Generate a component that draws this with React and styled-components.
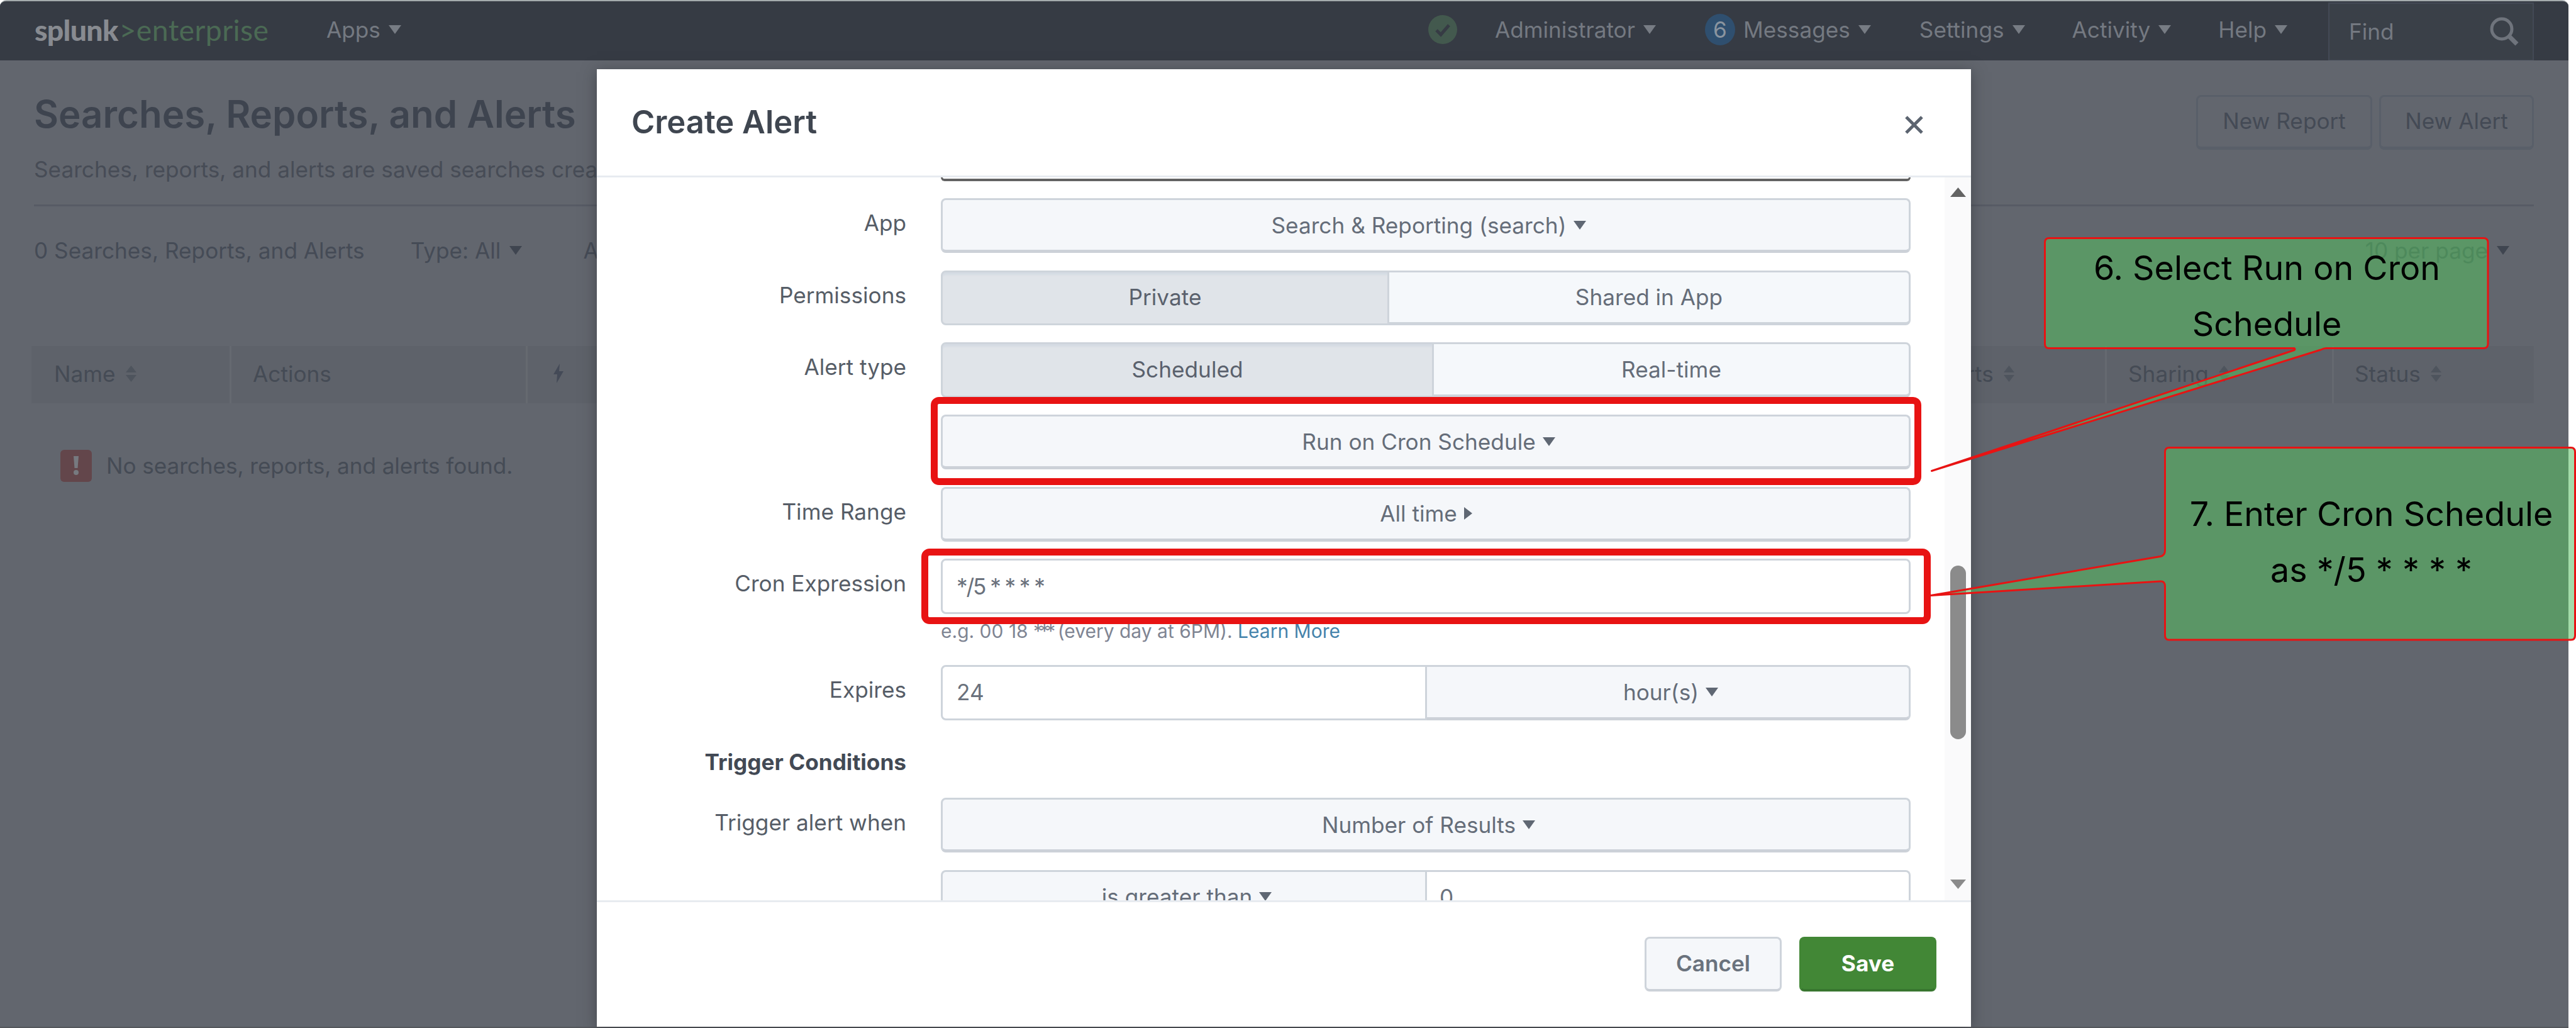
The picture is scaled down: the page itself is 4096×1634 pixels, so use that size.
import React from "react";
import styled, { createGlobalStyle } from "styled-components";

const GlobalStyle = createGlobalStyle`
  *, *::before, *::after { box-sizing: border-box; }
  html, body { margin: 0; padding: 0; background: #fff; overflow: hidden; }
  body { font-family: Inter, "Liberation Sans", sans-serif; font-size: 35.2px; color: #555d68; }
  h1, h2, p { margin: 0; font-weight: inherit; font-size: inherit; }
`;

const Screen = styled.div`
  position: relative;
  width: 4096px;
  height: 1634px;
  overflow: hidden;
`;

const Page = styled.div`
  width: 4084px;
  height: 1634px;
  background: #62666e;
  border-top: 2px solid #a4abad;
  border-bottom: 2px solid #54575c;
  border-radius: 10px 10px 0 0;
  overflow: hidden;
`;

/* ---------- top bar ---------- */

const NavBar = styled.nav`
  display: flex;
  align-items: stretch;
  height: 94px;
  padding: 0 55px 0 55px;
  background: #363b44;
  color: #747981;
`;

const Logo = styled.div`
  display: flex;
  align-items: center;
  gap: 2px;
  width: 464px;
  padding-bottom: 4px;
  font-family: Lato, "Liberation Sans", sans-serif;
  font-size: 46.4px;
  white-space: nowrap;
`;

const LogoName = styled.span`
  font-weight: 900;
  letter-spacing: -0.7px;
  color: #888b91;
`;

const LogoProduct = styled.span`
  color: #4b6a54;
  letter-spacing: 0.4px;
`;

const NavItem = styled.div`
  display: flex;
  align-items: center;
  gap: 13px;
  padding-bottom: 5px;
  margin-right: ${(p) => p.$after || 0}px;
  white-space: nowrap;
`;

const NavRight = styled.div`
  display: flex;
  margin-left: auto;
`;

const Badge = styled.span`
  display: flex;
  align-items: center;
  justify-content: center;
  width: 48px;
  height: 50px;
  border-radius: 50%;
  background: #2f4f6f;
  color: #8a949f;
`;

const FindBox = styled.div`
  display: flex;
  align-items: center;
  justify-content: space-between;
  width: 327px;
  margin-top: 2px;
  padding: 0 22px 2px 31px;
  background: #3a4048;
  border: 2px solid #434955;
  border-bottom-width: 1px;
`;

/* ---------- page header ---------- */

const PageHead = styled.header`
  display: flex;
  justify-content: space-between;
  align-items: flex-start;
  height: 232px;
  margin: 0 55px 0 54px;
  padding-top: 45px;
  border-bottom: 3px solid #575b65;
`;

const PageTitle = styled.h1`
  font-size: 60px;
  line-height: 80px;
  font-weight: 600;
  color: #3e444f;
`;

const PageNote = styled.p`
  margin-top: 20px;
  line-height: 56px;
  white-space: nowrap;
  color: #474c56;
`;

const HeadActions = styled.div`
  display: flex;
  gap: 11px;
  padding-top: 10px;
`;

const GhostButton = styled.button`
  width: ${(p) => p.$w}px;
  height: 87px;
  padding: 0 0 3px;
  font: inherit;
  color: #444a55;
  background: transparent;
  border: 3px solid #595f69;
  border-bottom-width: 5px;
  border-radius: 8px;
`;

const FilterBar = styled.div`
  display: flex;
  align-items: center;
  height: 140px;
  padding: 0 94px 0 54px;
  color: #454b56;
  white-space: nowrap;
`;

const Filter = styled.span`
  display: flex;
  align-items: center;
  gap: 14px;
  margin-left: ${(p) => (p.$end ? "auto" : (p.$before || 0) + "px")};
`;

/* ---------- table ---------- */

const TableHead = styled.div`
  display: grid;
  grid-template-columns: 318px 471px 2220px 291px 361px 1fr;
  height: 91px;
  margin: 82px 55px 0 50px;
  background: #5e626a;
  color: #454b55;
`;

const HeadCell = styled.div`
  display: flex;
  align-items: center;
  gap: 16px;
  padding: 0 0 4px ${(p) => p.$pad}px;
  border-right: ${(p) => (p.$last ? 0 : 3)}px solid #656970;
`;

const EmptyRow = styled.div`
  display: flex;
  align-items: center;
  gap: 23px;
  height: 52px;
  margin: 73px 0 0 96px;
  letter-spacing: -0.08px;
  color: #454b55;
`;

const ErrorMark = styled.span`
  display: flex;
  align-items: center;
  justify-content: center;
  width: 50px;
  height: 51px;
  border-radius: 6px;
  background: #63464b;
`;

/* ---------- dialog ---------- */

const Dialog = styled.section`
  position: absolute;
  left: 949px;
  top: 110px;
  width: 2185px;
  height: 1522px;
  display: flex;
  flex-direction: column;
  background: #fff;
  box-shadow: 0 4px 22px rgba(40, 42, 46, 0.5);
`;

const DialogHead = styled.header`
  display: flex;
  align-items: center;
  justify-content: space-between;
  height: 172px;
  padding: 0 76px 0 55px;
  border-bottom: 3px solid #e7ebf0;
  svg { margin-top: 7px; }
`;

const DialogTitle = styled.h2`
  padding-bottom: 3px;
  font-size: 50.7px;
  font-weight: 600;
  color: #3f4650;
`;

const DialogBody = styled.div`
  display: flex;
  flex: none;
  height: 1149px;
  overflow: hidden;
`;

const Form = styled.div`
  flex: none;
  width: 2143px;
  display: flex;
  flex-direction: column;
`;

const FormRow = styled.div`
  flex: none;
  display: grid;
  grid-template-columns: 492px 1542px;
  column-gap: 55px;
  margin-bottom: ${(p) => p.$after ?? 27.5}px;
`;

const Label = styled.label`
  grid-column: 1;
  line-height: 79px;
  text-align: right;
  white-space: nowrap;
  font-weight: ${(p) => (p.$strong ? 700 : 400)};
  color: ${(p) => (p.$strong ? "#424954" : "#565d67")};
`;

const Controls = styled.div`
  grid-column: 2;
  display: flex;
  height: 87.2px;
`;

const edge = "#ced4db";

const Control = styled.div`
  display: flex;
  align-items: center;
  flex: ${(p) => (p.$w ? "none" : 1)};
  width: ${(p) => (p.$w ? p.$w + "px" : "auto")};
  border: 3px solid ${edge};
  border-left-width: ${(p) => (p.$join === "right" ? 0 : 3)}px;
  border-radius: ${(p) =>
    p.$join === "left" ? "8px 0 0 8px" : p.$join === "right" ? "0 8px 8px 0" : "8px"};
  white-space: nowrap;
`;

const Select = styled(Control)`
  justify-content: center;
  gap: 11px;
  padding-left: ${(p) => p.$shift ?? 9}px;
  border-bottom: 5px solid #ccd1d8;
  background: #f5f7fa;
  color: #656d79;
`;

const Toggle = styled(Control)`
  justify-content: center;
  border-bottom-width: ${(p) => (p.$on ? 3 : 5)}px;
  padding-bottom: ${(p) => (p.$on ? 2 : 0)}px;
  background: ${(p) => (p.$on ? "#e0e4e9" : "#f5f8fb")};
  box-shadow: ${(p) => (p.$on ? "inset 0 6px 3px -2px #d5dbe3" : "none")};
  color: ${(p) => (p.$on ? "#5a616d" : "#656d79")};
`;

const Field = styled(Control)`
  padding: 0 0 1px ${(p) => (p.$join === "right" ? 20 : 22)}px;
  background: #fff;
  color: #6a717c;
  letter-spacing: ${(p) => p.$track || 0}px;
`;

const ClippedField = styled.div`
  grid-column: 2;
  height: 6px;
  border: 3px solid #636363;
  border-top: 0;
  border-bottom-width: 4px;
  border-radius: 0 0 6px 6px;
`;

const Help = styled.p`
  grid-column: 2;
  line-height: 54px;
  font-size: 30px;
  white-space: nowrap;
  color: #7f8593;
`;

const Tight = styled.span`
  letter-spacing: -5px;
`;

const Link = styled.a`
  color: #4583ab;
`;

const Scrollbar = styled.div`
  flex: none;
  display: flex;
  flex-direction: column;
  align-items: center;
  width: 42px;
  padding: 16px 0 18px;
  background: #fafafb;
`;

const Thumb = styled.div`
  width: 25px;
  height: 276px;
  margin: 586px 0 auto;
  border-radius: 13px;
  background: #8b8b8b;
`;

const DialogFoot = styled.footer`
  display: flex;
  justify-content: flex-end;
  gap: 28px;
  flex: 1;
  padding: 55px 55px 0 0;
  border-top: 3px solid #e7ebf0;
`;

const FootButton = styled.button`
  width: 218px;
  height: 87px;
  padding: 0 0 2px;
  font: inherit;
  font-weight: ${(p) => (p.$primary ? 700 : 600)};
  color: ${(p) => (p.$primary ? "#fff" : "#6a727d")};
  background: ${(p) => (p.$primary ? "#428736" : "#f5f7fa")};
  border: 3px solid ${(p) => (p.$primary ? "#428736" : edge)};
  border-bottom: 4px solid ${(p) => (p.$primary ? "#38762f" : "#ccd1d8")};
  border-radius: 8px;
`;

/* ---------- annotations over the page ---------- */

const Highlight = styled.div`
  position: absolute;
  left: ${(p) => p.$x}px;
  top: ${(p) => p.$y}px;
  width: ${(p) => p.$w}px;
  height: ${(p) => p.$h}px;
  border: 11px solid #e81313;
  border-radius: 13px;
`;

const Bubbles = styled.svg`
  position: absolute;
  left: 0;
  top: 0;
`;

const CalloutText = styled.div`
  position: absolute;
  left: ${(p) => p.$x}px;
  top: ${(p) => p.$y}px;
  width: ${(p) => p.$w}px;
  height: ${(p) => p.$h}px;
  display: flex;
  flex-direction: column;
  align-items: center;
  justify-content: center;
  font-size: 53.8px;
  line-height: 88.7px;
  white-space: nowrap;
  color: #000;
`;

/* ---------- icons ---------- */

const Caret = ({ color = "#5f6773" }) => (
  <svg width="20" height="14" viewBox="0 0 20 14">
    <path d="M0 0H20L10 14Z" fill={color} />
  </svg>
);
const CaretRight = () => (
  <svg width="13" height="20" viewBox="0 0 13 20">
    <path d="M0 0V20L13 10Z" fill="#5f6773" />
  </svg>
);
const Sort = () => (
  <svg width="17" height="26" viewBox="0 0 17 26">
    <path d="M8.500 0L17 11H0ZM8.500 26L0 15H17Z" fill="#4e545d" />
  </svg>
);
const Bolt = () => (
  <svg width="16" height="31" viewBox="0 0 16 31">
    <path d="M10 0L0 17H6L5 31L16 12H9Z" fill="#444a57" />
  </svg>
);
const Check = () => (
  <svg width="46" height="46" viewBox="0 0 46 46">
    <circle cx="23" cy="23" r="23" fill="#43594e" />
    <path d="M13 24L20 31L33 16" fill="none" stroke="#363b44" strokeWidth="5" />
  </svg>
);
const Magnifier = () => (
  <svg width="46" height="46" viewBox="0 0 46 46">
    <circle cx="19" cy="19" r="16" fill="none" stroke="#6f747c" strokeWidth="5" />
    <path d="M30 30L43 43" stroke="#6f747c" strokeWidth="7" />
  </svg>
);
const Bang = () => (
  <svg width="10" height="30" viewBox="0 0 10 30">
    <path d="M1 0H9L7.500 19H2.500Z" fill="#777a80" />
    <circle cx="5" cy="26" r="4" fill="#777a80" />
  </svg>
);
const Cross = () => (
  <svg width="29" height="29" viewBox="0 0 29 29">
    <path d="M2 2L27 27M27 2L2 27" stroke="#5c6470" strokeWidth="5" />
  </svg>
);
const ScrollArrow = ({ down }) => (
  <svg width="25" height="15" viewBox="0 0 25 15">
    <path d={down ? "M0 0H25L12.500 15Z" : "M0 15H25L12.500 0Z"} fill={down ? "#8b8b8b" : "#636363"} />
  </svg>
);

const NavMenu = ({ children, after }) => (
  <NavItem $after={after}>
    {children}
    <Caret color="#777c84" />
  </NavItem>
);

export default function App() {
  return (
    <Screen>
      <GlobalStyle />
      <Page>
        <NavBar>
          <Logo>
            <LogoName>splunk</LogoName>
            <LogoProduct>&gt;enterprise</LogoProduct>
          </Logo>
          <NavMenu>Apps</NavMenu>
          <NavRight>
            <NavItem $after={60}>
              <Check />
            </NavItem>
            <NavMenu after={78}>Administrator</NavMenu>
            <NavMenu after={77}>
              <Badge>6</Badge>
              Messages
            </NavMenu>
            <NavMenu after={75}>Settings</NavMenu>
            <NavMenu after={75}>Activity</NavMenu>
            <NavMenu after={65}>Help</NavMenu>
            <FindBox>
              Find
              <Magnifier />
            </FindBox>
          </NavRight>
        </NavBar>

        <PageHead>
          <div>
            <PageTitle>Searches, Reports, and Alerts</PageTitle>
            <PageNote>Searches, reports, and alerts are saved searches created</PageNote>
          </div>
          <HeadActions>
            <GhostButton $w={280}>New Report</GhostButton>
            <GhostButton $w={246}>New Alert</GhostButton>
          </HeadActions>
        </PageHead>

        <FilterBar>
          <span>0 Searches, Reports, and Alerts</span>
          <Filter $before={73}>
            Type: All <Caret color="#3f4550" />
          </Filter>
          <Filter $before={97}>App</Filter>
          <Filter $end>
            10 per page <Caret color="#3f4550" />
          </Filter>
        </FilterBar>

        <TableHead>
          <HeadCell $pad={36}>
            Name <Sort />
          </HeadCell>
          <HeadCell $pad={34}>Actions</HeadCell>
          <HeadCell $pad={41}>
            <Bolt />
          </HeadCell>
          <HeadCell $pad={14}>
            Alerts <Sort />
          </HeadCell>
          <HeadCell $pad={34}>
            Sharing <Sort />
          </HeadCell>
          <HeadCell $pad={33} $last>
            Status <Sort />
          </HeadCell>
        </TableHead>

        <EmptyRow>
          <ErrorMark>
            <Bang />
          </ErrorMark>
          No searches, reports, and alerts found.
        </EmptyRow>
      </Page>

      <Dialog>
        <DialogHead>
          <DialogTitle>Create Alert</DialogTitle>
          <Cross />
        </DialogHead>

        <DialogBody>
          <Form>
            <FormRow $after={27}>
              <ClippedField />
            </FormRow>
            <FormRow>
              <Label>App</Label>
              <Controls>
                <Select>
                  Search &amp; Reporting (search) <Caret />
                </Select>
              </Controls>
            </FormRow>
            <FormRow>
              <Label>Permissions</Label>
              <Controls>
                <Toggle $on $w={713} $join="left">
                  Private
                </Toggle>
                <Toggle $join="right">Shared in App</Toggle>
              </Controls>
            </FormRow>
            <FormRow>
              <Label>Alert type</Label>
              <Controls>
                <Toggle $on $w={784} $join="left">
                  Scheduled
                </Toggle>
                <Toggle $join="right">Real-time</Toggle>
              </Controls>
            </FormRow>
            <FormRow>
              <Controls>
                <Select>
                  Run on Cron Schedule <Caret />
                </Select>
              </Controls>
            </FormRow>
            <FormRow>
              <Label>Time Range</Label>
              <Controls>
                <Select $shift={1}>
                  All time <CaretRight />
                </Select>
              </Controls>
            </FormRow>
            <FormRow $after={27.7}>
              <Label>Cron Expression</Label>
              <Controls>
                <Field $track={-2.1}>*/5 * * * *</Field>
              </Controls>
              <Help>
                e.g. 00 18 <Tight>***</Tight> (every day at 6PM). <Link>Learn More</Link>
              </Help>
            </FormRow>
            <FormRow>
              <Label>Expires</Label>
              <Controls>
                <Field $w={773} $join="left">
                  24
                </Field>
                <Select $join="right">
                  hour(s) <Caret />
                </Select>
              </Controls>
            </FormRow>
            <FormRow $after={17}>
              <Label $strong>Trigger Conditions</Label>
            </FormRow>
            <FormRow>
              <Label>Trigger alert when</Label>
              <Controls>
                <Select>
                  Number of Results <Caret />
                </Select>
              </Controls>
            </FormRow>
            <FormRow>
              <Controls>
                <Select $w={773} $join="left">
                  is greater than <Caret />
                </Select>
                <Field $join="right">0</Field>
              </Controls>
            </FormRow>
          </Form>
          <Scrollbar>
            <ScrollArrow />
            <Thumb />
            <ScrollArrow down />
          </Scrollbar>
        </DialogBody>

        <DialogFoot>
          <FootButton>Cancel</FootButton>
          <FootButton $primary>Save</FootButton>
        </DialogFoot>
      </Dialog>

      <Highlight $x={1480} $y={631} $w={1575} $h={140} />
      <Highlight $x={1465} $y={872} $w={1605} $h={120} />

      <Bubbles width="4096" height="1634" viewBox="0 0 4096 1634">
        <g fill="rgba(85,191,97,0.54)" stroke="#e81313" strokeWidth="3" strokeLinejoin="round">
          <path d="M3258 378.500H3949Q3956 378.500 3956 385.500V546.500Q3956 553.500 3949 553.500H3699Q3695 553.500 3690 556L3071.500 748.500L3648 556.500Q3650 555 3648 553.500H3258Q3251.500 553.500 3251.500 546.500V385.500Q3251.500 378.500 3258 378.500Z" />
          <path d="M3449 711.500H4088Q4094.500 711.500 4094.500 718.500V1010Q4094.500 1017 4088 1017H3449Q3442.500 1017 3442.500 1010V932Q3442.500 923.500 3435 924L3070 946.500L3435 884.500Q3442.500 883 3442.500 875V718.500Q3442.500 711.500 3449 711.500Z" />
        </g>
      </Bubbles>
      <CalloutText $x={3251} $y={382} $w={707} $h={178}>
        <span>6. Select Run on Cron</span>
        <span>Schedule</span>
      </CalloutText>
      <CalloutText $x={3443} $y={711} $w={655} $h={301}>
        <span>7. Enter Cron Schedule</span>
        <span>as */5 * * * *</span>
      </CalloutText>
    </Screen>
  );
}
